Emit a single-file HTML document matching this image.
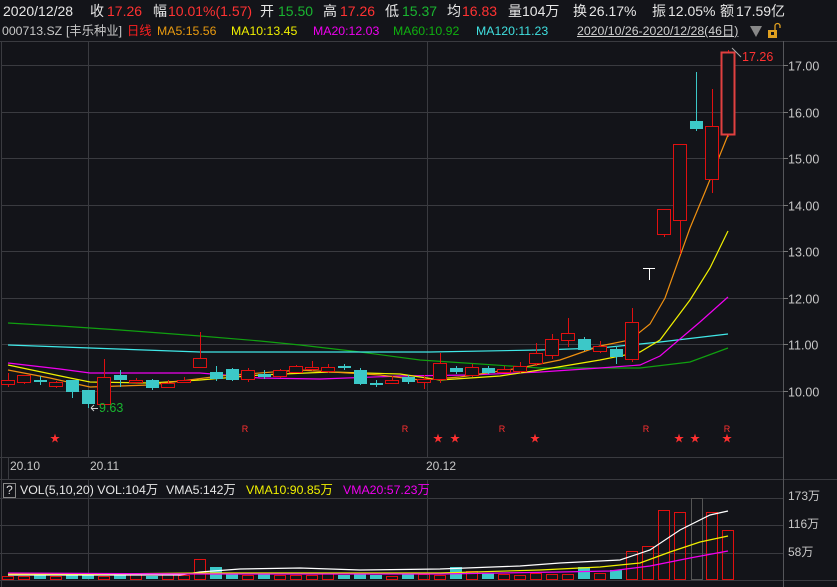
<!DOCTYPE html>
<html><head><meta charset="utf-8"><style>
html,body{margin:0;padding:0;background:#131419;width:837px;height:587px;overflow:hidden}
body{position:relative;font-family:"Liberation Sans","Noto Sans CJK SC",sans-serif}
.t{position:absolute;white-space:nowrap;line-height:1}
.r1{top:4px;font-size:14px}
.r2{top:25px;font-size:12.3px}
.w{color:#e6e6e6}.red{color:#ff3232}.grn{color:#19b530}
svg{position:absolute;left:0;top:0}
</style></head><body>
<svg id="s" width="837" height="587" xmlns="http://www.w3.org/2000/svg"></svg>
<div class="t r1 w" style="left:3px">2020/12/28</div>
<div class="t r1 w" style="left:90px">收</div><div class="t r1 red" style="left:107px">17.26</div>
<div class="t r1 w" style="left:153px">幅</div><div class="t r1 red" style="left:168px">10.01%(1.57)</div>
<div class="t r1 w" style="left:260px">开</div><div class="t r1 grn" style="left:278px">15.50</div>
<div class="t r1 w" style="left:323px">高</div><div class="t r1 red" style="left:340px">17.26</div>
<div class="t r1 w" style="left:385px">低</div><div class="t r1 grn" style="left:402px">15.37</div>
<div class="t r1 w" style="left:447px">均</div><div class="t r1 red" style="left:462px">16.83</div>
<div class="t r1 w" style="left:508px">量</div><div class="t r1 w" style="left:522px">104万</div>
<div class="t r1 w" style="left:573px">换</div><div class="t r1 w" style="left:589px">26.17%</div>
<div class="t r1 w" style="left:652px">振</div><div class="t r1 w" style="left:668px">12.05%</div>
<div class="t r1 w" style="left:720px">额</div><div class="t r1 w" style="left:736px">17.59亿</div>

<div class="t r2" style="left:2px;color:#c8c8c8">000713.SZ</div>
<div class="t r2" style="left:66px;color:#c8c8c8">[丰乐种业]</div>
<div class="t r2" style="left:127px;color:#ff2020">日线</div>
<div class="t r2" style="left:157px;color:#e89a10">MA5:15.56</div>
<div class="t r2" style="left:231px;color:#f0f000">MA10:13.45</div>
<div class="t r2" style="left:313px;color:#f000f0">MA20:12.03</div>
<div class="t r2" style="left:393px;color:#10b010">MA60:10.92</div>
<div class="t r2" style="left:476px;color:#40e0e0">MA120:11.23</div>
<div class="t r2" style="left:577px;color:#d0d0d0;text-decoration:underline">2020/10/26-2020/12/28(46日)</div>

<div class="t" style="top:460px;font-size:12px;color:#c8c8c8;left:10px">20.10</div>
<div class="t" style="left:90px;top:460px;font-size:12px;color:#c8c8c8">20.11</div>
<div class="t" style="left:426px;top:460px;font-size:12px;color:#c8c8c8">20.12</div>

<div class="t" style="left:3px;top:483px;width:11px;height:13px;border:1px solid #888;color:#ddd;font-size:12px;text-align:center">?</div>
<div class="t" style="left:20px;top:484px;font-size:12.3px;color:#e6e6e6">VOL(5,10,20) VOL:104万</div>
<div class="t" style="left:166px;top:484px;font-size:12.3px;color:#e6e6e6">VMA5:142万</div>
<div class="t" style="left:246px;top:484px;font-size:12.3px;color:#f0f000">VMA10:90.85万</div>
<div class="t" style="left:343px;top:484px;font-size:12.3px;color:#f000f0">VMA20:57.23万</div>

<div class="t" style="left:788px;top:490px;font-size:12px;color:#c8c8c8">173万</div>
<div class="t" style="left:788px;top:518px;font-size:12px;color:#c8c8c8">116万</div>
<div class="t" style="left:788px;top:546px;font-size:12px;color:#c8c8c8">58万</div>
<div class="t" style="left:742px;top:51px;font-size:12.5px;color:#ff3232">17.26</div>
<div class="t" style="left:99px;top:402px;font-size:12.5px;color:#19b530">9.63</div>
<script>
const s=document.getElementById('s');let h='';
const L=(x1,y1,x2,y2,c,w)=>h+=`<line x1="${x1}" y1="${y1}" x2="${x2}" y2="${y2}" stroke="${c}" stroke-width="${w||1}"/>`;
const G='#3a3b40';
L(0,41.5,837,41.5,G);L(0,457.5,783,457.5,G);L(0,479.5,837,479.5,G);L(0,498.5,783,498.5,G);L(0,525.5,783,525.5,G);L(0,553.5,783,553.5,G);L(0,580.5,837,580.5,G);
L(1.5,41,1.5,587,G);L(783.5,41,783.5,587,'#55565a');L(88.5,41,88.5,457,G);L(427.5,41,427.5,457,G);L(88.5,480,88.5,580,G);L(427.5,480,427.5,580,G);L(8.5,458,8.5,479,G);
const py=p=>65+(17-p)*46.57;
for(let p=10;p<=17;p++){let y=Math.round(py(p))+.5;L(1,y,783,y,G);L(783,y,788,y,'#777');h+=`<text x="788" y="${y+5}" fill="#c8c8c8" font-size="12.5" font-family="Liberation Sans">${p.toFixed(2)}</text>`;}
const C=[[8,380,384,'r',373,387],[24,375,382,'r',375,384],[40,380,381,'c',376,385],[56,382,386,'r',381,388],[72,380,392,'c',380,398],[88,390,404,'c',390,408],[104,377,404,'r',359,404],[120,375,380,'c',370,387],[136,380,382,'r',378,384],[152,380,388,'c',379,390],[168,383,387,'r',380,388],[184,380,382,'r',377,383],[200,358,367,'r',332,367],[216,372,379,'c',366,381],[232,369,380,'c',368,381],[248,370,379,'r',368,382],[264,374,377,'c',370,379],[280,370,376,'r',369,378],[296,366,372,'r',365,373],[312,367,369,'r',361,371],[328,367,371,'r',364,373],[344,366,368,'c',364,370],[360,370,384,'c',368,385],[376,383,384,'c',380,387],[392,380,383,'r',376,384],[408,377,382,'c',375,384],[424,379,382,'r',375,389],[440,363,379,'r',353,383],[456,368,372,'c',366,374],[472,367,375,'r',364,377],[488,368,373,'c',366,374],[504,369,372,'r',366,373],[520,366,371,'r',362,373],[536,353,363,'r',343,366],[552,339,355,'r',334,359],[568,333,340,'r',318,347],[584,339,350,'c',337,351],[600,346,351,'r',341,353],[616,349,357,'c',346,364],[632,322,359,'r',308,362],[664,209,234,'r',209,237],[680,144,220,'r',144,254],[696,121,129,'c',72,131],[712,126,179,'r',89,193],[728,52,134,'r',50,137]];
const RED='#e01010',CY='#3cc8c8';
const pl=(pts,c)=>h+=`<polyline points="${pts}" fill="none" stroke="${c}" stroke-width="1.2"/>`;
pl('8,323 60,326 120,330 200,336 260,341 300,345 360,352 420,360 480,364 540,368 640,368 690,362 728,348','#10a010');
pl('8,345 90,348 200,352 300,352 430,352 540,350 600,348 660,342 728,334','#40e8e8');
pl('8,363 60,369 90,373 200,373 260,378 320,379 400,376 470,375 540,372 600,368 640,365 660,356 700,322 728,297','#f000f0');
pl('8,365 70,378 90,382 150,383 200,380 260,375 330,372 400,374 440,380 500,376 540,370 600,360 640,352 660,340 690,300 710,268 728,231','#f0f000');
pl('8,370 50,378 90,387 150,385 220,376 300,370 380,375 420,380 460,377 520,368 560,360 600,346 630,340 650,324 665,298 690,228 705,192 728,135','#f09010');
for(const c of C){const[x,t,b,k,hi,lo]=c;const col=k=='r'?RED:CY;const w=x==728?2:1;
 L(x+.5,hi,x+.5,lo,col);
 if(k=='r')h+=`<rect x="${x-6.5}" y="${t+.5}" width="13" height="${Math.max(b-t,1)}" fill="#131419" stroke="${x==728?'#e04040':RED}" stroke-width="${w}"/>`;
 else h+=`<rect x="${x-6}" y="${t}" width="13" height="${Math.max(b-t,2)}" fill="${CY}"/>`;}
L(643,268.5,655,268.5,'#fff');L(649.5,268,649.5,280,'#fff');
L(91,408.5,98,408.5,'#ccc');L(91,408,94,405,'#ccc');L(91,408,94,411,'#ccc');
L(732,48,741,57,'#aaa');
for(const x of [55,438,455,535,679,695,727])h+=`<text x="${x}" y="442" fill="#ff3030" font-size="10" text-anchor="middle">★</text>`;
for(const x of [245,405,502,646,727])h+=`<text x="${x}" y="432" fill="#ff3030" font-size="9" text-anchor="middle" font-family="Liberation Sans">R</text>`;
const V={8:3,24:3,40:4,56:3,72:4,88:5,104:3,120:4,136:5,152:3,168:5,184:4,200:20,216:12,232:5,248:4,264:5,280:4,296:4,312:4,328:6,344:4,360:5,376:4,392:3,408:5,424:5,440:4,456:12,472:8,488:6,504:5,520:4,536:6,552:5,568:5,584:12,600:6,616:9,632:28,648:33,664:69,680:67,697:81,712:67,728:49};
const cm={};for(const c of C)cm[c[0]]=c[3];cm[648]='r';
for(const k in V){const x=+k,v=V[k],col=cm[x]=='c'?'c':'r';const y=579-v;
 if(col=='c')h+=`<rect x="${x-6}" y="${y}" width="12" height="${v}" fill="${CY}"/>`;
 else h+=`<rect x="${x-5.5}" y="${y+.5}" width="11" height="${v}" fill="none" stroke="${x==697?'#555':RED}"/>`;}
pl('8,575 100,575 180,575 200,572 240,569 300,568 360,570 440,569 520,566 560,563 600,561 620,560 650,550 680,530 710,515 728,511','#ffffff');
pl('8,574 100,574 200,573 300,573 440,573 540,570 600,567 640,563 670,552 700,542 728,536','#f0f000');
pl('8,573 200,574 300,574 440,574 560,572 610,571 650,566 690,558 728,551','#f000f0');
h+=`<polygon points="750,26 762,26 756,37" fill="#888"/>`;
h+=`<rect x="768" y="30" width="9" height="8" fill="#e0a020"/><rect x="771" y="32" width="3" height="3" fill="#131419"/><path d="M775 30 V26 a2.5 2.5 0 0 1 5 0 V28" fill="none" stroke="#e0a020" stroke-width="1.3"/>`;
s.innerHTML=h;
</script>
</body></html>
